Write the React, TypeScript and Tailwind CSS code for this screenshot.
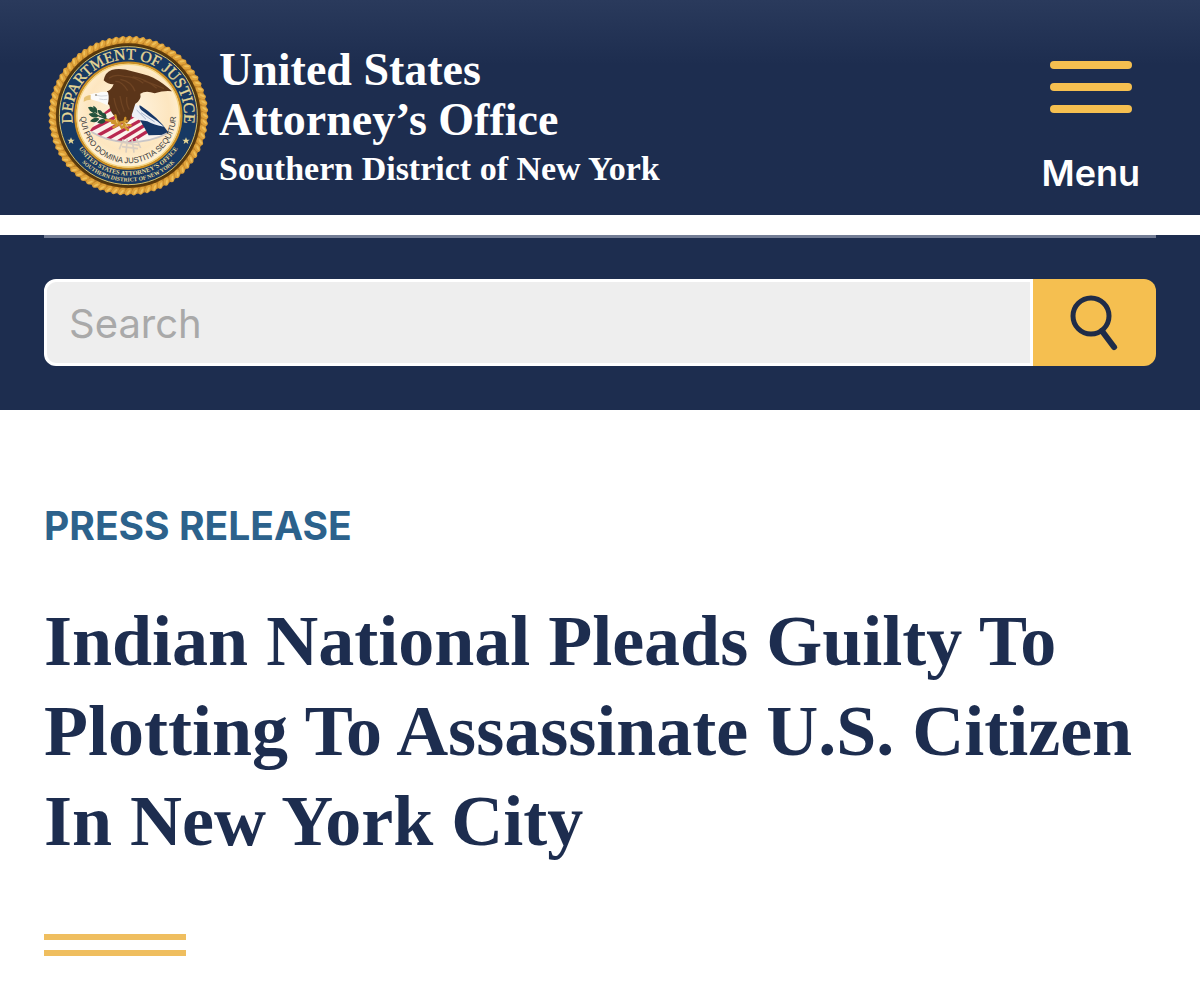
import React from "react";

const CX = 265;
const CY = 263;

function Seal() {
  const beads = Array.from({ length: 72 }, (_, i) => i * 5);
  return (
    <svg viewBox="12 12 504 504" className="h-42 w-42 shrink-0" role="img" aria-label="Department of Justice seal">
      <defs>
        <radialGradient id="cream" cx="50%" cy="45%" r="55%">
          <stop offset="0" stopColor="#fff6e4" />
          <stop offset="0.7" stopColor="#fde6c0" />
          <stop offset="1" stopColor="#fff3da" />
        </radialGradient>
        <path id="arc-top" d="M 102 303 A 168 168 0 1 1 428 303" />
        <path id="arc-motto" d="M 127 225 A 143 143 0 1 0 403 225" />
        <path id="arc-office" d="M 97 321 A 177 177 0 0 0 433 321" />
        <path id="arc-district" d="M 92 359 A 198 198 0 0 0 438 359" />
        <clipPath id="shield">
          <path d="M150 308 Q178 262 213 238 L300 232 Q355 268 386 314 Q330 344 262 343 Q190 340 150 308Z" />
        </clipPath>
      </defs>
      <circle cx={CX} cy={CY} r="236" fill="#bd8128" />
      {beads.map((a) => (
        <g key={a} transform={`rotate(${a} ${CX} ${CY})`}>
          <ellipse cx={CX} cy="35" rx="8" ry="13" fill="#dfa23a" transform={`rotate(38 ${CX} 35)`} />
          <ellipse cx={CX - 1} cy="34" rx="3" ry="8" fill="#efc05a" transform={`rotate(38 ${CX} 34)`} />
        </g>
      ))}
      <circle cx={CX} cy={CY} r="217" fill="#5b3a0c" />
      <circle cx={CX} cy={CY} r="211" fill="#4a3514" />
      <circle cx={CX} cy={CY} r="207" fill="#173963" stroke="#d9c06a" strokeWidth="3" />
      <circle cx={CX} cy={CY} r="159" fill="url(#cream)" stroke="#c98d24" strokeWidth="7" />
      <circle cx={CX} cy={CY} r="154" fill="none" stroke="#f4d37f" strokeWidth="4" />

      <g clipPath="url(#shield)">
        <rect x="140" y="225" width="260" height="130" fill="#fbf3ec" />
        <g stroke="#b92850" strokeWidth="10">
          <path d="M140 285 L240 228" />
          <path d="M145 310 L260 250" />
          <path d="M160 330 L285 262" />
          <path d="M190 340 L300 278" />
          <path d="M225 346 L320 288" />
          <path d="M258 350 L345 296" />
        </g>
        <path d="M298 226 L400 226 L400 320 L326 322 L300 276Z" fill="#173766" />
      </g>
      <path d="M155 312 Q200 340 262 343 Q330 344 382 316" fill="none" stroke="#c9c5c6" strokeWidth="5" />
      <g stroke="#d9cec1" strokeWidth="5" fill="none">
        <path d="M250 334 L238 364 M262 334 L258 374 M276 334 L282 374 M288 330 L302 360 M242 342 L296 352 M246 356 L294 362" />
      </g>

      <path d="M276 222 Q292 228 304 246 Q328 266 352 280 L372 296 Q342 292 322 280 Q298 278 276 266Z" fill="#edf0f6" />
      <path d="M290 246 L318 274 M303 254 L344 282" stroke="#aab7ce" strokeWidth="3" />

      <path
        d="M191 157 Q196 132 215 126 Q242 119 276 130 Q313 138 340 149 Q372 166 396 190 Q372 187 344 196 Q318 186 301 197 Q305 215 286 227 Q278 253 270 275 Q258 292 245 284 Q232 288 225 266 Q211 253 208 232 Q200 228 203 210 L201 190 Q214 187 221 169 Q204 170 191 157Z"
        fill="#5b3519"
      />
      <path
        d="M207 151 Q224 137 252 145 Q285 145 310 166 M226 160 Q246 159 263 188 M241 154 Q275 160 285 190 M278 146 Q318 153 350 181 M222 210 Q226 238 240 260 M240 204 Q244 229 253 251 M260 207 Q258 229 268 245 M310 158 Q340 168 372 182"
        fill="none"
        stroke="#6f4423"
        strokeWidth="4"
      />
      <path d="M204 193 Q188 188 174 195 Q151 195 141 207 Q158 218 178 221 Q191 226 202 232 Q209 213 204 193Z" fill="#fbfbfb" />
      <path d="M170 202 Q180 206 202 203 M178 213 Q190 216 202 214" fill="none" stroke="#d3d7dc" strokeWidth="3" />
      <path d="M152 201 Q138 202 132 210 L131 221 Q140 215 152 215Z" fill="#e6c274" />
      <circle cx="168" cy="201" r="2" fill="#4a3514" />

      <g fill="#23523c">
        <path d="M144 238 Q160 232 168 252 Q151 256 144 238Z" />
        <path d="M160 233 Q174 238 172 257 Q158 250 160 233Z" />
        <path d="M146 258 Q164 250 174 266 Q158 274 146 258Z" />
        <path d="M150 280 Q162 264 178 272 Q170 288 150 280Z" />
        <path d="M173 246 Q188 244 188 262 Q174 264 173 246Z" />
        <path d="M183 254 Q202 252 199 272 Q184 270 183 254Z" />
        <path d="M172 284 Q182 268 198 276 Q192 293 172 284Z" />
      </g>
      <path d="M150 245 L172 262 L212 278" fill="none" stroke="#23523c" strokeWidth="4" />
      <path
        d="M198 276 L229 280 M226 262 L232 292 L220 298 M233 280 L246 300 M256 270 L250 294 L264 306 M252 289 L272 292 M228 288 L216 284 M240 284 L262 279"
        fill="none"
        stroke="#cf942c"
        strokeWidth="7"
        strokeLinecap="round"
      />
      <path d="M227 270 L232 286 M254 282 L265 298" fill="none" stroke="#f3cf73" strokeWidth="3" />

      <g fill="#e6d795" textAnchor="middle" className="font-['Liberation_Serif',serif]">
        <text fontSize="47" stroke="#e6d795" strokeWidth="1">
          <textPath href="#arc-top" startOffset="50%">DEPARTMENT OF JUSTICE</textPath>
        </text>
        <text fontSize="19" fontWeight="700">
          <textPath href="#arc-office" startOffset="50%">UNITED STATES ATTORNEY’S OFFICE</textPath>
        </text>
        <text fontSize="17" fontWeight="700">
          <textPath href="#arc-district" startOffset="50%">SOUTHERN DISTRICT OF NEW YORK</textPath>
        </text>
      </g>
      <text fontSize="24" fill="#3c3c40" textAnchor="middle" className="font-['Liberation_Sans',sans-serif]">
        <textPath href="#arc-motto" startOffset="50%">QUI PRO DOMINA JUSTITIA SEQUITUR</textPath>
      </text>
      <g fill="#e6d795">
        <path d="M93 328 l3 7 8 0 -6 5 2 8 -7 -5 -7 5 2 -8 -6 -5 8 0z" />
        <path d="M438 328 l3 7 8 0 -6 5 2 8 -7 -5 -7 5 2 -8 -6 -5 8 0z" />
      </g>
    </svg>
  );
}

export default function App() {
  return (
    <div className="bg-white font-['Inter','Liberation_Sans',sans-serif] text-[#1d2d4f]">
      <header>
        <div className="flex items-start justify-between bg-[#1d2d4f] bg-linear-to-b from-[#2a3a5c] to-[#1d2d4f] to-30% px-11 pt-8 pb-[15px] text-white">
          <a href="#home" className="flex items-start gap-[7px]">
            <Seal />
            <span className="flex flex-col pt-[13px] font-['Liberation_Serif',serif] font-bold">
              <span className="text-[46px] leading-[50px]">
                United States
                <br />
                Attorney’s Office
              </span>
              <span className="text-[34px] leading-[48px]">Southern District of New York</span>
            </span>
          </a>
          <button type="button" className="mr-4 flex flex-col items-center pt-[29px]">
            <span className="flex flex-col gap-[14px]">
              <span className="h-2 w-[82px] rounded-full bg-[#f5bf50]" />
              <span className="h-2 w-[82px] rounded-full bg-[#f5bf50]" />
              <span className="h-2 w-[82px] rounded-full bg-[#f5bf50]" />
            </span>
            <span className="mt-9 text-[36px] leading-12 font-semibold">Menu</span>
          </button>
        </div>
        <div className="mt-5 bg-[#1d2d4f] px-11 pb-11">
          <form role="search" className="flex flex-col" onSubmit={(e) => e.preventDefault()}>
            <div className="mb-[41px] h-[3px] bg-[#737d95]" />
            <div className="flex h-[87px]">
              <input
                type="search"
                aria-label="Search"
                placeholder="Search"
                className="min-w-0 flex-1 rounded-l-xl border-3 border-white bg-[#eeeeee] px-[22px] pt-[2px] text-[40px] text-[#1d2d4f] outline-none placeholder:text-[#a9a9a9]"
              />
              <button type="submit" aria-label="Submit search" className="flex w-[123px] items-center justify-center rounded-r-xl bg-[#f5bf50]">
                <svg viewBox="0 0 50 56" className="h-14 w-[50px]" fill="none" stroke="#1f2c48" strokeWidth="5">
                  <circle cx="21" cy="21" r="18" />
                  <path d="M32 36 L44 52" strokeWidth="6" strokeLinecap="round" />
                </svg>
              </button>
            </div>
          </form>
        </div>
      </header>
      <main className="px-11 pt-[92px] pb-7">
        <p className="text-[39px] leading-12 font-bold text-[#2c628c]">PRESS RELEASE</p>
        <h1 className="mt-[46px] font-['Liberation_Serif',serif] text-[72px] leading-[90px] font-bold">
          Indian National Pleads Guilty To Plotting To Assassinate U.S. Citizen In New York City
        </h1>
        <div className="mt-[68px] h-[22px] w-[142px] border-y-6 border-[#efbe5f]" />
      </main>
    </div>
  );
}
